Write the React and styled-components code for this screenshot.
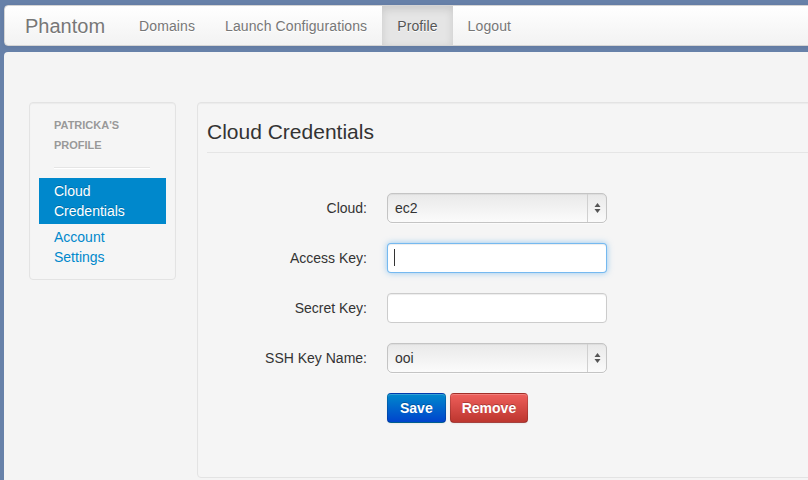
import React from "react"
import styled, { createGlobalStyle } from "styled-components"

const GlobalStyle = createGlobalStyle`
  html, body {
    margin: 0;
    padding: 0;
    overflow: hidden;
  }
  body {
    background: #6781a9;
    font-family: "Liberation Sans", Arial, sans-serif;
    font-size: 14px;
    line-height: 20px;
    color: #333;
  }
  * {
    box-sizing: border-box;
  }
`

const Page = styled.div`
  width: 1100px;
  padding: 5px 0 0 4px;
`

const Navbar = styled.nav`
  display: flex;
  height: 41px;
  border: 1px solid #d4d4d4;
  border-radius: 4px;
  background: linear-gradient(#ffffff, #f2f2f2);
  box-shadow: 0 1px 4px rgba(0, 0, 0, 0.065);
  margin-bottom: 6px;
`

const Brand = styled.a`
  padding: 10px 19px 9px 20px;
  font-size: 20px;
  line-height: 20px;
  color: #777;
  text-decoration: none;
  text-shadow: 0 1px 0 #fff;
`

const NavLink = styled.a`
  padding: 10px 15px 9px 15px;
  letter-spacing: 0.1px;
  color: ${p => (p.$active ? "#555" : "#777")};
  background: ${p => (p.$active ? "#e5e5e5" : "transparent")};
  box-shadow: ${p => (p.$active ? "inset 0 3px 8px rgba(0, 0, 0, 0.125)" : "none")};
  text-decoration: none;
  text-shadow: 0 1px 0 #fff;
`

const Main = styled.main`
  display: flex;
  align-items: flex-start;
  gap: 21px;
  min-height: 520px;
  padding: 50px 0 0 25px;
  background: #f4f4f4;
  border-radius: 4px 0 0 0;
`

const Well = styled.div`
  background: #f5f5f5;
  border: 1px solid #e3e3e3;
  border-radius: 4px;
  box-shadow: inset 0 1px 1px rgba(0, 0, 0, 0.04);
`

const Sidebar = styled(Well)`
  width: 147px;
  padding: 9px;
`

const NavHeader = styled.div`
  padding: 3px 15px;
  font-size: 11px;
  font-weight: bold;
  line-height: 20px;
  color: #999;
  text-transform: uppercase;
  text-shadow: 0 1px 0 rgba(255, 255, 255, 0.5);
`

const Divider = styled.div`
  height: 1px;
  margin: 9px 16px 9px 15px;
  background: #e5e5e5;
  border-bottom: 1px solid #fff;
  box-sizing: content-box;
`

const SideLink = styled.a`
  display: block;
  padding: 3px 15px;
  color: ${p => (p.$active ? "#fff" : "#0088cc")};
  background: ${p => (p.$active ? "#0088cc" : "transparent")};
  text-shadow: ${p => (p.$active ? "0 -1px 0 rgba(0, 0, 0, 0.2)" : "none")};
  text-decoration: none;
`

const Panel = styled(Well)`
  flex: 1;
  height: 376px;
  padding: 9px 0 0 9px;
`

const Legend = styled.h3`
  margin: 0 0 40px 0;
  font-size: 21px;
  font-weight: normal;
  line-height: 40px;
  color: #333;
  border-bottom: 1px solid #e5e5e5;
`

const ControlGroup = styled.div`
  display: flex;
  margin-bottom: 20px;
`

const Label = styled.label`
  width: 160px;
  margin-right: 20px;
  padding-top: 5px;
  text-align: right;
`

const FieldWrap = styled.div`
  position: relative;
  width: 220px;
`

const TextInput = styled.input`
  display: block;
  width: 220px;
  height: 30px;
  padding: 4px 6px;
  font: inherit;
  color: #555;
  background: #fff;
  border: 1px solid ${p => (p.$focus ? "rgba(82, 168, 236, 0.8)" : "#ccc")};
  border-radius: 4px;
  outline: none;
  box-shadow: ${p =>
    p.$focus
      ? "inset 0 1px 1px rgba(0, 0, 0, 0.075), 0 0 6px rgba(82, 168, 236, 0.6)"
      : "inset 0 1px 1px rgba(0, 0, 0, 0.075)"};
`

const Caret = styled.span`
  position: absolute;
  left: 7px;
  top: 6px;
  width: 1px;
  height: 17px;
  background: #333;
`

const SelectBox = styled.div`
  display: flex;
  width: 220px;
  height: 30px;
  border: 1px solid #c4c4c4;
  border-radius: 5px;
  background: linear-gradient(#e9e9e9 0%, #f1f1f1 45%, #fbfbfb 100%);
  box-shadow: inset 0 1px 1px rgba(0, 0, 0, 0.06), 0 1px 0 rgba(255, 255, 255, 0.6);
`

const SelectValue = styled.span`
  flex: 1;
  padding: 4px 7px;
  color: #333;
`

const SelectArrows = styled.span`
  display: flex;
  align-items: center;
  justify-content: center;
  width: 19px;
  border-left: 1px solid #d0d0d0;
`

const Actions = styled.div`
  display: flex;
  gap: 4px;
  margin-left: 180px;
`

const Button = styled.button`
  height: 30px;
  padding: 4px ${p => (p.$variant === "danger" ? "11px" : "12px")};
  font: inherit;
  font-weight: bold;
  color: #fff;
  text-shadow: 0 -1px 0 rgba(0, 0, 0, 0.25);
  border: 1px solid rgba(0, 0, 0, 0.15);
  border-bottom-color: rgba(0, 0, 0, 0.3);
  border-radius: 4px;
  background: ${p =>
    p.$variant === "danger"
      ? "linear-gradient(#ee5f5b, #bd362f)"
      : "linear-gradient(#0088cc, #0044cc)"};
  box-shadow: inset 0 1px 0 rgba(255, 255, 255, 0.2), 0 1px 2px rgba(0, 0, 0, 0.05);
`

const Arrows = () => (
  <svg width="7" height="12" viewBox="0 0 7 12">
    <polygon points="0.5,5 3.5,1 6.5,5" fill="#555" />
    <polygon points="0.5,7 3.5,11 6.5,7" fill="#555" />
  </svg>
)

const Select = ({ value }) => (
  <SelectBox>
    <SelectValue>{value}</SelectValue>
    <SelectArrows>
      <Arrows />
    </SelectArrows>
  </SelectBox>
)

const App = () => {
  return (
    <Page>
      <GlobalStyle />
      <Navbar>
        <Brand href="#">Phantom</Brand>
        <NavLink href="#">Domains</NavLink>
        <NavLink href="#">Launch Configurations</NavLink>
        <NavLink href="#" $active>Profile</NavLink>
        <NavLink href="#">Logout</NavLink>
      </Navbar>
      <Main>
        <Sidebar>
          <NavHeader>Patricka's Profile</NavHeader>
          <Divider />
          <SideLink href="#" $active>Cloud Credentials</SideLink>
          <SideLink href="#">Account Settings</SideLink>
        </Sidebar>
        <Panel>
          <Legend>Cloud Credentials</Legend>
          <ControlGroup>
            <Label>Cloud:</Label>
            <Select value="ec2" />
          </ControlGroup>
          <ControlGroup>
            <Label>Access Key:</Label>
            <FieldWrap>
              <TextInput type="text" $focus />
              <Caret />
            </FieldWrap>
          </ControlGroup>
          <ControlGroup>
            <Label>Secret Key:</Label>
            <FieldWrap>
              <TextInput type="text" />
            </FieldWrap>
          </ControlGroup>
          <ControlGroup>
            <Label>SSH Key Name:</Label>
            <Select value="ooi" />
          </ControlGroup>
          <Actions>
            <Button>Save</Button>
            <Button $variant="danger">Remove</Button>
          </Actions>
        </Panel>
      </Main>
    </Page>
  )
}

export default App
